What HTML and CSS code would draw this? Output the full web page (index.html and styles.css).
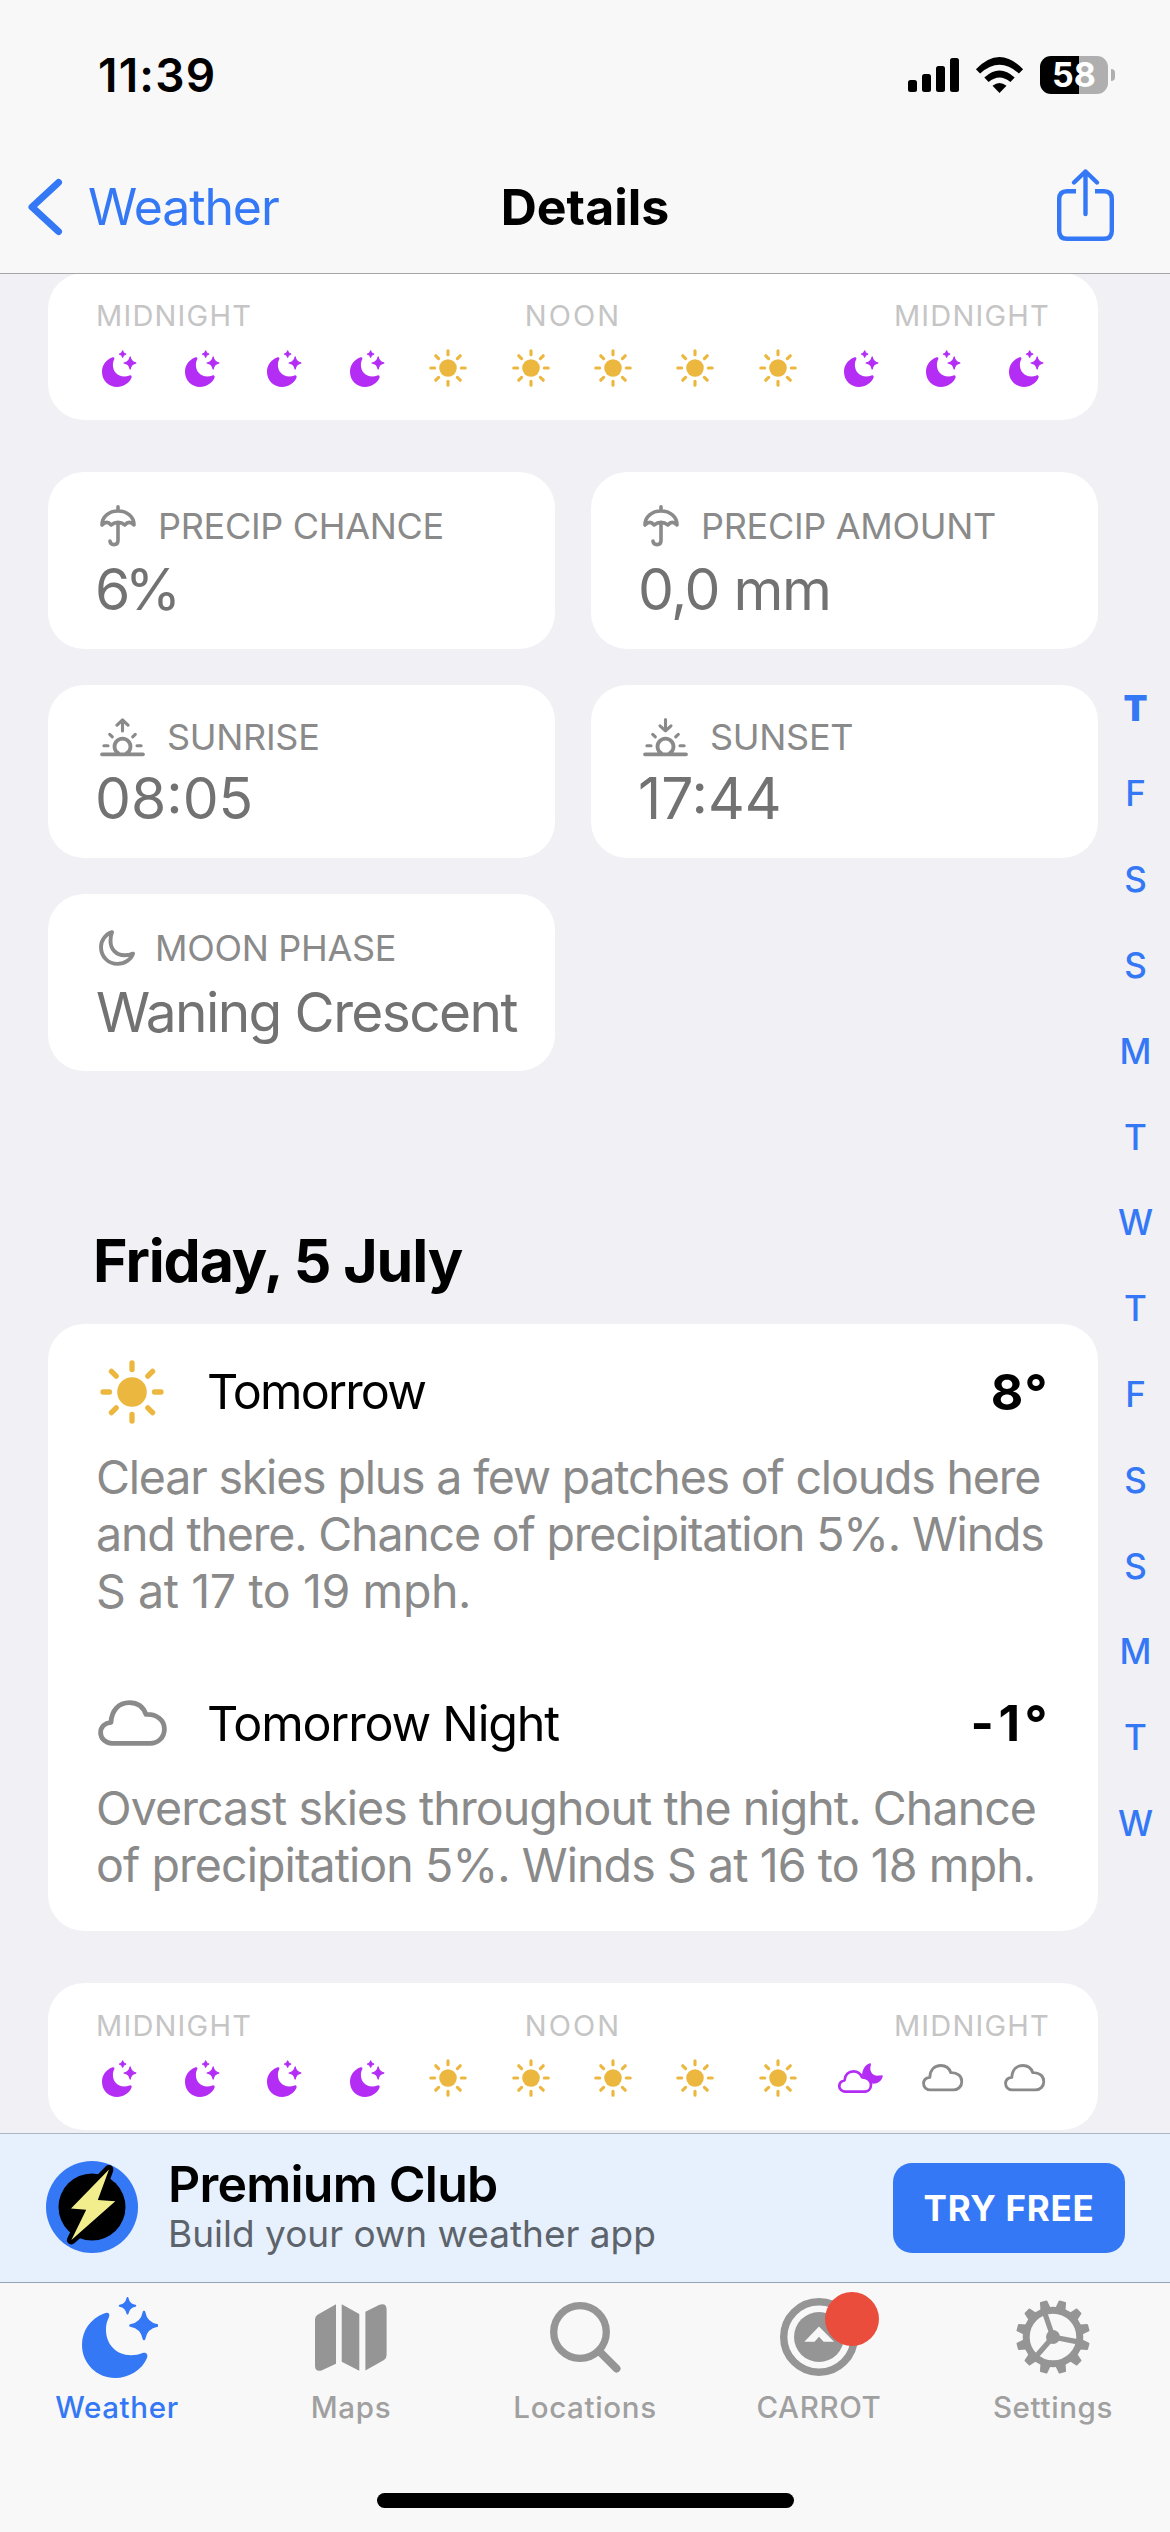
FILE: index.html
```html
<!DOCTYPE html>
<html lang="en">
<head>
<meta charset="utf-8">
<title>Details</title>
<link rel="stylesheet" href="styles.css">
</head>
<body>
<svg class="defs" aria-hidden="true">
  <defs>
    <symbol id="moon-stars" viewBox="0 0 76 81">
      <path d="M22 16.500C8 22 0 34 0 48C0 66.500 15 81 33 81C47 81 60 73 65 61C66.300 57 64 54.700 60.500 56C57 57.500 53 58.200 49 58.200C34 58.200 24 47 24 33C24 27 25.200 24 27 20C28.300 16.500 26 14.800 22 16.500Z"/>
      <path transform="translate(62 28.500)" d="M0-13.500Q2-2 13.500 0Q2 2 0 13.500Q-2 2-13.500 0Q-2-2 0-13.500Z" stroke="currentColor" stroke-width="2.500" stroke-linejoin="round"/>
      <path transform="translate(45.500 8.800)" d="M0-7.700Q1.300-1.300 7.700 0Q1.300 1.300 0 7.700Q-1.300 1.300-7.700 0Q-1.300-1.300 0-7.700Z" stroke="currentColor" stroke-width="2" stroke-linejoin="round"/>
    </symbol>
    <symbol id="sun" viewBox="-32 -32 64 64">
      <circle r="14.800"/>
      <path d="M0-22.500V-29M0 22.500V29M-22.500 0H-29M22.500 0H29M-15.800-15.800L-20.600-20.600M15.800-15.800L20.600-20.600M-15.800 15.800L-20.600 20.600M15.800 15.800L20.600 20.600" fill="none" stroke="currentColor" stroke-width="5.300" stroke-linecap="round"/>
    </symbol>
    <symbol id="cloud" viewBox="0 0 69 46">
      <path d="M14 43.400C8 43.400 2.600 38.800 2.600 32.700C2.600 26.700 7 23 13 22.300C13.500 10.500 20.500 2.600 31.500 2.600C40 2.600 45.500 7.500 48 14.400C58.500 13.800 66.400 20 66.400 29C66.400 37.500 60 43.400 52 43.400Z" fill="none" stroke="currentColor" stroke-width="4.800" stroke-linejoin="round"/>
    </symbol>
    <symbol id="cloud-moon" viewBox="0 0 45 30">
      <path d="M24 12.500C24.300 6 27.500 1.500 31.500.400C33 .100 33.300 .900 32.800 2.200C31 7.500 34 13.500 41 12.600C43 12.200 45 11.600 44.700 13.200C44 17.500 40 20.800 35 20.700Z"/>
      <path d="M7.500 28.700C4 28.700 1.300 26.300 1.300 23.200C1.300 20 3.500 18 6.500 17.500C7 11.700 10.500 8.400 15.500 8.400C19.500 8.400 22.500 10.700 24 14.300C29 14.300 33 17.300 33 21.700C33 26 30 28.700 26.500 28.700Z" fill="#fff" stroke="currentColor" stroke-width="2.700" stroke-linejoin="round"/>
    </symbol>
    <symbol id="umbrella" viewBox="0 0 36 42">
      <path d="M2 20C2 11.500 9 6 18 6S34 11.500 34 20Q29 14.800 25 20Q18 14.800 11 20Q7 14.800 2 20ZM18 1.900V6M18 17.500V35.500Q18 39.600 14 39.600T10 36" fill="none" stroke="currentColor" stroke-width="3.600" stroke-linecap="round" stroke-linejoin="round"/>
    </symbol>
    <g id="horizon" fill="none" stroke="currentColor" stroke-linecap="round" stroke-linejoin="round">
      <path d="M2 36.300H43M18.500 35.500A8 8 0 1 1 26.500 35.500" stroke-width="3.800"/>
      <path d="M3.900 27.700H8M37 27.700H41.100M9.700 16.300L12.300 18.900M35.300 16.300L32.700 18.900" stroke-width="3.100"/>
    </g>
    <symbol id="sunrise" viewBox="0 0 45 39">
      <use href="#horizon"/>
      <path d="M22.500 2V13M17 7.200L22.500 2L28 7.200" fill="none" stroke="currentColor" stroke-width="3.100" stroke-linecap="round" stroke-linejoin="round"/>
    </symbol>
    <symbol id="sunset" viewBox="0 0 45 39">
      <use href="#horizon"/>
      <path d="M22.500 1.600V12.600M17 7.800L22.500 12.800L28 7.800" fill="none" stroke="currentColor" stroke-width="3.100" stroke-linecap="round" stroke-linejoin="round"/>
    </symbol>
    <symbol id="moon" viewBox="0 0 36 36">
      <path d="M13 2.200C6 4.500 2 10.500 2 17C2 26.500 9 33.900 18.500 33.900C26 33.900 32 29.500 34 23.600C31 25 28 25.300 25.500 25.300C17 25.300 11.500 19 11.500 11C11.500 7.500 12 5 13 2.200Z" fill="none" stroke="currentColor" stroke-width="3.900" stroke-linejoin="round"/>
    </symbol>
    <path id="tooth" d="M-5.200-29L-3.800-36.200Q-3.600-37-2.800-37H2.800Q3.600-37 3.800-36.200L5.200-29Z"/>
  </defs>
</svg>

<header class="header">
  <div class="status">
    <span class="time">11:39</span>
    <svg class="signal" viewBox="0 0 51 34"><rect y="22" width="9" height="12" rx="2.500"/><rect x="14" y="16" width="9" height="18" rx="2.500"/><rect x="28" y="8" width="9" height="26" rx="2.500"/><rect x="42" width="9" height="34" rx="2.500"/></svg>
    <svg class="wifi" viewBox="0 0 48 36"><path d="M24 36L31 28.800Q24 23.200 17 28.800ZM8.800 20.600L13.100 25Q24 16 34.900 25L39.200 20.600Q24 6.500 8.800 20.600ZM.400 12.300L4.600 16.500Q24-1 43.400 16.500L47.600 12.300Q24-12.300.400 12.300Z"/></svg>
    <div class="battery"><span class="level">58</span><span class="nub"></span></div>
  </div>
  <nav class="nav">
    <a class="back"><svg class="chevron" viewBox="0 0 34 56"><path d="M30.500 3.500L4 28L30.500 52.500"/></svg><span>Weather</span></a>
    <h1 class="title">Details</h1>
    <svg class="share" viewBox="0 0 57 72"><path d="M19 22.200H10Q2.200 22.200 2.200 30V62Q2.200 69.800 10 69.800H47Q54.800 69.800 54.800 62V30Q54.800 22.200 47 22.200H38"/><path class="arrow" d="M28.500 2.500V45M17 13.500L28.500 2.500L40 13.500"/></svg>
  </nav>
</header>

<main class="main">
  <div class="content">
    <section class="card hours">
      <div class="marks"><span>MIDNIGHT</span><span class="noon">NOON</span><span>MIDNIGHT</span></div>
      <div class="icons">
        <svg class="i-night"><use href="#moon-stars"/></svg><svg class="i-night"><use href="#moon-stars"/></svg><svg class="i-night"><use href="#moon-stars"/></svg><svg class="i-night"><use href="#moon-stars"/></svg>
        <svg class="i-sun"><use href="#sun"/></svg><svg class="i-sun"><use href="#sun"/></svg><svg class="i-sun"><use href="#sun"/></svg><svg class="i-sun"><use href="#sun"/></svg><svg class="i-sun"><use href="#sun"/></svg>
        <svg class="i-night"><use href="#moon-stars"/></svg><svg class="i-night"><use href="#moon-stars"/></svg><svg class="i-night"><use href="#moon-stars"/></svg>
      </div>
    </section>

    <section class="stats">
      <div class="card stat"><div class="label"><svg class="s-umbrella"><use href="#umbrella"/></svg>PRECIP CHANCE</div><div class="value percent">6%</div></div>
      <div class="card stat"><div class="label"><svg class="s-umbrella"><use href="#umbrella"/></svg>PRECIP AMOUNT</div><div class="value amount">0,0 mm</div></div>
      <div class="card stat tight"><div class="label"><svg class="s-sun"><use href="#sunrise"/></svg>SUNRISE</div><div class="value">08:05</div></div>
      <div class="card stat tight"><div class="label"><svg class="s-sun"><use href="#sunset"/></svg>SUNSET</div><div class="value">17:44</div></div>
      <div class="card stat"><div class="label"><svg class="s-moon"><use href="#moon"/></svg>MOON PHASE</div><div class="value phase">Waning Crescent</div></div>
    </section>

    <h2 class="day">Friday, 5 July</h2>

    <section class="card forecast">
      <div class="row"><span class="pic"><svg class="f-sun"><use href="#sun"/></svg></span><span class="name">Tomorrow</span><span class="temp">8°</span></div>
      <p class="text">Clear skies plus a few patches of clouds here<br>and there. Chance of precipitation 5%. Winds<br><span class="loose">S at 17 to 19 mph.</span></p>
      <div class="row night"><span class="pic"><svg class="f-cloud"><use href="#cloud"/></svg></span><span class="name long">Tomorrow Night</span><span class="temp minus">-1°</span></div>
      <p class="text wide">Overcast skies throughout the night. Chance<br>of precipitation 5%. Winds S at 16 to 18 mph.</p>
    </section>

    <section class="card hours">
      <div class="marks"><span>MIDNIGHT</span><span class="noon">NOON</span><span>MIDNIGHT</span></div>
      <div class="icons">
        <svg class="i-night"><use href="#moon-stars"/></svg><svg class="i-night"><use href="#moon-stars"/></svg><svg class="i-night"><use href="#moon-stars"/></svg><svg class="i-night"><use href="#moon-stars"/></svg>
        <svg class="i-sun"><use href="#sun"/></svg><svg class="i-sun"><use href="#sun"/></svg><svg class="i-sun"><use href="#sun"/></svg><svg class="i-sun"><use href="#sun"/></svg><svg class="i-sun"><use href="#sun"/></svg>
        <svg class="i-cloud-moon"><use href="#cloud-moon"/></svg><svg class="i-cloud"><use href="#cloud"/></svg><svg class="i-cloud"><use href="#cloud"/></svg>
      </div>
    </section>
  </div>

  <aside class="index">
    <span class="current">T</span><span>F</span><span>S</span><span>S</span><span>M</span><span>T</span><span>W</span><span>T</span><span>F</span><span>S</span><span>S</span><span>M</span><span>T</span><span>W</span>
  </aside>
</main>

<section class="banner">
  <svg class="bolt" viewBox="0 0 92 92"><circle cx="46" cy="46" r="46" fill="#3478f6"/><circle cx="46" cy="46" r="33.500"/><path d="M63 8.500L51.800 39L69.300 40.200L25.400 79L40.200 48.800L25 47.500Z" fill="#f2ee8d" stroke="#000" stroke-width="9" stroke-linejoin="round" paint-order="stroke"/></svg>
  <div class="pitch">
    <div class="club">Premium Club</div>
    <div class="sub">Build your own weather app</div>
  </div>
  <button class="try">TRY FREE</button>
</section>

<footer class="footer">
  <nav class="tabs">
    <a class="tab active"><span class="glyph"><svg width="82" height="81" viewBox="-6 0 82 81"><use href="#moon-stars" width="76" height="81"/></svg></span>Weather</a>
    <a class="tab"><span class="glyph"><svg width="72" height="67" viewBox="0 0 72 67"><path d="M0 15.500Q0 12.300 2.500 10.800L21 .300V59.700L7 66.300Q0 68.500 0 61.500ZM26.700.300L44.300 10V66.700L26.700 57.700ZM50.400 7.700L64.500.800Q71.600-1.300 71.600 5.500V50.500Q71.600 54.500 68.600 56.200L50.400 66.500Z"/></svg></span>Maps</a>
    <a class="tab"><span class="glyph"><svg width="71" height="71" viewBox="0 0 71 71"><g fill="none" stroke="currentColor" stroke-linecap="round"><circle cx="30" cy="30" r="26.300" stroke-width="7.300"/><path d="M50 50L66.500 66.500" stroke-width="8"/></g></svg></span>Locations</a>
    <a class="tab"><span class="glyph"><svg width="78" height="78" viewBox="0 0 78 78"><circle cx="39" cy="39" r="35.300" fill="none" stroke="currentColor" stroke-width="7.400"/><circle cx="39" cy="39" r="25"/><path d="M39 28.500L54 43.700H43.700L39 38.800L34.500 43.700H24.300Z" fill="#f8f8f8"/></svg><i class="badge"></i></span>CARROT</a>
    <a class="tab"><span class="glyph"><svg width="74" height="74" viewBox="-37 -37 74 74"><circle r="26.800" fill="none" stroke="currentColor" stroke-width="7"/><circle r="7"/><path d="M0 0L23.600 4.600M0 0L-15.700 18M0 0L-7.800-22.700" stroke="currentColor" stroke-width="5.200"/><use href="#tooth" transform="rotate(15)"/><use href="#tooth" transform="rotate(45)"/><use href="#tooth" transform="rotate(75)"/><use href="#tooth" transform="rotate(105)"/><use href="#tooth" transform="rotate(135)"/><use href="#tooth" transform="rotate(165)"/><use href="#tooth" transform="rotate(195)"/><use href="#tooth" transform="rotate(225)"/><use href="#tooth" transform="rotate(255)"/><use href="#tooth" transform="rotate(285)"/><use href="#tooth" transform="rotate(315)"/><use href="#tooth" transform="rotate(345)"/></svg></span>Settings</a>
  </nav>
  <div class="home"></div>
</footer>
</body>
</html>
```
FILE: styles.css
```css
* { box-sizing: border-box; margin: 0; padding: 0; }

body {
  width: 1170px;
  height: 2532px;
  overflow: hidden;
  background: #f0f0f5;
  color: #000;
  font-family: Inter, "Liberation Sans", sans-serif;
}

svg { display: block; flex: none; fill: currentColor; overflow: visible; }
.defs { position: absolute; width: 0; height: 0; }

/* Header */
.header {
  position: relative;
  z-index: 1;
  height: 274px;
  background: #f8f8f8;
  border-bottom: 1px solid #a6a6a9;
}
.status { display: flex; align-items: center; gap: 16px; height: 149px; padding: 0 55px 0 98px; }
.time { margin-right: auto; font-size: 46px; font-weight: 600; letter-spacing: 1.2px; line-height: 60px; }
.signal { width: 51px; height: 34px; }
.wifi { width: 49px; height: 36px; }
.battery { display: flex; align-items: center; gap: 3px; }
.level {
  width: 68px;
  height: 38px;
  border-radius: 11px;
  background: linear-gradient(90deg, #000 39px, #afafaf 39px);
  color: #fff;
  font-size: 34px;
  font-weight: 700;
  line-height: 38px;
  text-align: center;
}
.nub { width: 4px; height: 12px; border-radius: 0 4px 4px 0; background: #afafaf; }

.nav { display: grid; grid-template-columns: 1fr auto 1fr; align-items: center; height: 116px; padding: 0 56px 0 28px; }
.back { display: flex; align-items: center; gap: 26px; color: #3478f6; font-size: 50px; letter-spacing: -1.1px; }
.chevron { width: 34px; height: 56px; fill: none; stroke: #3478f6; stroke-width: 7; stroke-linecap: round; stroke-linejoin: round; }
.title { margin-left: 28px; font-size: 50px; font-weight: 700; letter-spacing: 0; line-height: 60px; }
.share { justify-self: end; width: 57px; height: 72px; margin-top: -4px; fill: none; stroke: #3478f6; stroke-width: 4.4; }
.arrow { stroke-linecap: round; stroke-linejoin: round; }

/* Scrolling area */
.main { display: flex; height: 1859px; padding-left: 48px; overflow: hidden; }
.content { width: 1050px; margin-top: -1px; }
.card { background: #fff; border-radius: 36px; }

.hours { height: 147px; padding-top: 23px; }
.marks { display: flex; justify-content: space-between; padding: 0 48px; color: #c5c5c5; font-size: 29px; line-height: 39px; letter-spacing: 1.2px; }
.noon { letter-spacing: 2.1px; }
.icons { display: grid; grid-template-columns: repeat(12, 82.4px); align-items: center; justify-items: center; height: 65px; padding-left: 29.4px; }
.i-night { width: 34.5px; height: 37px; margin: 1px 0 0 2px; color: #b42df5; }
.i-sun { width: 38px; height: 38px; color: #ecb73f; }
.i-cloud { width: 41.4px; height: 27.6px; color: #8a8a8a; }
.i-cloud-moon { width: 45px; height: 30px; color: #b42df5; }

.stats { display: grid; grid-template-columns: 507px 507px; grid-template-rows: 177px 173px 177px; gap: 36px; margin-top: 52px; }
.stat { padding: 30px 0 0 47px; }
.stat.tight { padding-top: 28px; }
.label { display: flex; align-items: center; gap: 22px; height: 48px; padding-left: 5px; color: #8a8a8a; font-size: 36px; letter-spacing: -.3px; white-space: nowrap; }
.value { margin-top: 7px; color: #727272; font-size: 57px; line-height: 66px; white-space: nowrap; }
.tight .value { margin-top: 5px; }
.percent { letter-spacing: -5.3px; }
.amount { letter-spacing: -1.5px; }
.phase { padding-left: 1px; font-size: 55px; letter-spacing: -1.6px; }
.s-umbrella { width: 36px; height: 42px; }
.s-sun { width: 45px; height: 39px; }
.s-moon { width: 36px; height: 36px; margin: 0 -2px 0 -1px; }

.day { margin: 150px 0 23px; padding-left: 45px; font-size: 59px; font-weight: 700; letter-spacing: -1.1px; line-height: 80px; }

.forecast { height: 607px; padding: 37px 49px 0 48px; margin-bottom: 52px; }
.row { display: flex; align-items: center; height: 61px; }
.row.night { margin-top: 73px; }
.pic { display: flex; justify-content: center; width: 72px; margin-right: 39px; }
.f-sun { width: 64px; height: 64px; color: #ecb73f; }
.f-cloud { width: 69px; height: 46px; color: #8a8a8a; }
.name { margin-right: auto; font-size: 48.5px; letter-spacing: -1.8px; }
.name.long { letter-spacing: -1.2px; }
.temp { font-size: 50px; font-weight: 700; letter-spacing: 1.5px; }
.temp.minus { letter-spacing: 4.5px; margin-right: -3px; }
.text { margin-top: 26.5px; color: #8a8a8a; font-size: 46.5px; line-height: 57px; letter-spacing: -1.18px; white-space: nowrap; }
.text.wide { letter-spacing: -.91px; }
.loose { letter-spacing: -.4px; }

.index { width: 72px; padding: 391.6px 0 0 3px; color: #3478f6; font-size: 35px; font-weight: 500; text-align: center; }
.index span { display: block; height: 85.8px; line-height: 85.8px; }
.index .current { font-weight: 900; }

/* Premium banner */
.banner {
  display: flex;
  align-items: center;
  height: 150px;
  padding: 0 45px 0 46px;
  background: #e7f1fd;
  border-top: 1px solid #a9b5c2;
  border-bottom: 1px solid #96a5b5;
}
.bolt { width: 92px; height: 92px; margin-top: -3px; }
.pitch { margin: 2px auto 0 30px; }
.club { font-size: 50px; font-weight: 600; line-height: 50px; letter-spacing: -.77px; }
.sub { color: #5d636b; font-size: 37px; line-height: 50px; }
.try {
  width: 232px;
  height: 90px;
  border: 0;
  border-radius: 19px;
  background: #3478f6;
  color: #fff;
  font: 700 35px/90px Inter, "Liberation Sans", sans-serif;
  letter-spacing: .7px;
}

/* Tab bar */
.footer { height: 249px; background: #f8f8f8; }
.tabs { display: grid; grid-template-columns: repeat(5, 234px); padding-top: 12px; }
.tab { display: flex; flex-direction: column; align-items: center; gap: 10px; color: #a0a0a0; font-size: 29.5px; font-weight: 500; line-height: 36px; letter-spacing: .65px; }
.glyph { position: relative; display: flex; align-items: center; height: 84px; color: #959595; }
.active, .active .glyph { color: #3478f6; }
.badge { position: absolute; left: 45px; top: -3px; width: 54px; height: 54px; border-radius: 50%; background: #eb4d3d; }
.home { width: 417px; height: 15px; margin: 68px auto 0; border-radius: 8px; background: #000; }
```
